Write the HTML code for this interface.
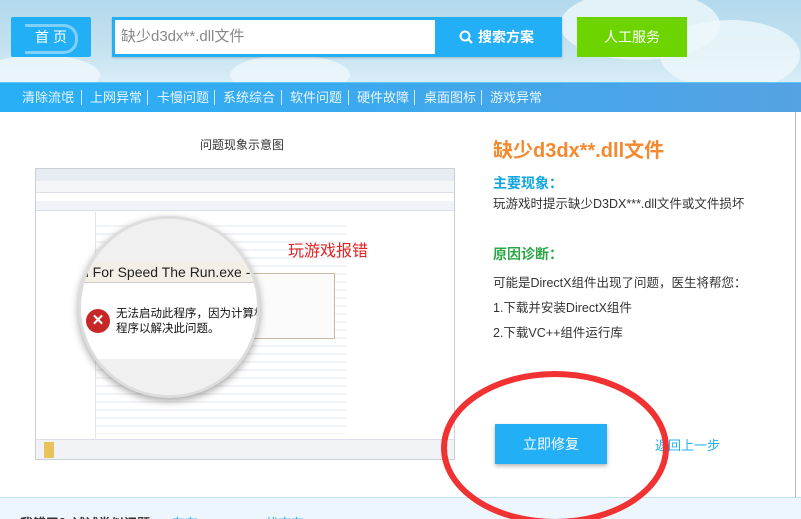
<!DOCTYPE html>
<html><head><meta charset="utf-8"><style>
*{margin:0;padding:0;box-sizing:border-box}
body{width:801px;height:519px;overflow:hidden;background:#fff;font-family:"Liberation Sans","Noto Sans CJK SC",sans-serif;position:relative}
.top{position:absolute;left:0;top:0;width:801px;height:82px;background:linear-gradient(180deg,#b3d9ec 0%,#c4e2f0 60%,#d9edf6 100%)}
.cloud{position:absolute;border-radius:50%;background:#eef7fb;opacity:.8}
.home{position:absolute;left:11px;top:17px;width:80px;height:40px;background:#22aff5;border-radius:2px;color:#fff;font-size:14px;line-height:40px;padding-left:24px;letter-spacing:4px}
.home:after{content:"";position:absolute;left:14px;top:7px;width:50px;height:24px;border:3px solid #7fd0f8;border-left:none;border-radius:0 14px 14px 0}
.search{position:absolute;left:112px;top:17px;width:250px;height:40px;background:#22aff5;padding:3px}
.search .in{position:absolute;left:3px;top:3px;width:320px;height:34px;background:#fff;color:#888;font-size:15px;line-height:34px;padding-left:6px}
.sbtn{position:absolute;left:435px;top:17px;width:127px;height:40px;background:#22aff5;color:#fff;font-size:14px;font-weight:bold;line-height:40px;padding-left:25px}
.sw{position:absolute;left:112px;top:17px;width:450px;height:40px;background:#22aff5;box-shadow:0 1px 2px rgba(0,0,0,.2)}
.green{position:absolute;left:577px;top:17px;width:110px;height:40px;background:#6dd400;color:#fff;font-size:14px;line-height:40px;text-align:center}
.nav{position:absolute;left:0;top:82px;width:801px;height:30px;background:linear-gradient(90deg,#27aff6,#55a2e4);border-top:1px solid #5cc6ff}
.nav span{position:absolute;top:0;color:#e8f6ff;font-size:13px;line-height:29px;white-space:nowrap}
.nav i{position:absolute;top:7px;width:1px;height:15px;background:#cfeaff}
.rline{position:absolute;left:795px;top:112px;width:1px;height:385px;background:#bbb}
.cap{position:absolute;left:200px;top:136px;font-size:12px;color:#333}
.win{position:absolute;left:35px;top:168px;width:420px;height:292px;background:#fff;border:1px solid #c9cfd6;overflow:hidden}
.circle{position:absolute;left:78px;top:216px;width:182px;height:182px;border-radius:50%;background:#fff;border:3px solid #ddd;box-shadow:0 3px 8px rgba(0,0,0,.35);overflow:hidden}
.title{position:absolute;left:493px;top:134px;font-size:20px;font-weight:bold;color:#f4892f}
.h{position:absolute;left:493px;font-size:14px;font-weight:bold}
.t{position:absolute;left:493px;font-size:12.5px;color:#333}
.fix{position:absolute;left:495px;top:424px;width:112px;height:40px;background:#22aff5;color:#fff;font-size:14px;text-align:center;line-height:40px;box-shadow:0 2px 4px rgba(0,0,0,.3)}
.back{position:absolute;left:655px;top:435px;font-size:13px;color:#22aff5}
.foot{position:absolute;left:0;top:497px;width:801px;height:22px;background:#edf6fd;border-top:1px solid #bfe0f5;overflow:hidden}
</style></head><body>
<div class="top">
<div class="cloud" style="left:560px;top:-10px;width:160px;height:70px"></div>
<div class="cloud" style="left:660px;top:20px;width:140px;height:70px"></div>
<div class="cloud" style="left:230px;top:55px;width:120px;height:40px"></div>
<div class="cloud" style="left:-20px;top:55px;width:120px;height:40px"></div>
</div>
<div class="home">首页</div>
<div class="sw"></div>
<div class="search"><div class="in">缺少d3dx**.dll文件</div></div>
<div class="sbtn"><svg width="14" height="14" viewBox="0 0 14 14" style="position:absolute;left:24px;top:13px"><circle cx="6" cy="6" r="4.5" fill="none" stroke="#fff" stroke-width="2"/><line x1="9.5" y1="9.5" x2="13" y2="13" stroke="#fff" stroke-width="2.2"/></svg><span style="margin-left:18px">搜索方案</span></div>
<div class="green">人工服务</div>
<div class="nav">
<span style="left:22px">清除流氓</span><i style="left:81px"></i>
<span style="left:90px">上网异常</span><i style="left:147px"></i>
<span style="left:157px">卡慢问题</span><i style="left:214px"></i>
<span style="left:223px">系统综合</span><i style="left:281px"></i>
<span style="left:290px">软件问题</span><i style="left:348px"></i>
<span style="left:357px">硬件故障</span><i style="left:414px"></i>
<span style="left:424px">桌面图标</span><i style="left:481px"></i>
<span style="left:490px">游戏异常</span>
</div>
<div class="rline"></div>
<div class="cap">问题现象示意图</div>
<div class="win">
<div style="height:12px;background:#e6ecf2"></div>
<div style="height:12px;background:#f4f6f8;border-bottom:1px solid #dde"></div>
<div style="height:8px;background:#fff"></div>
<div style="height:10px;background:#f0f4f8;border-bottom:1px solid #dde"></div>
<div style="position:absolute;left:0;top:43px;width:60px;height:230px;background:#fff;border-right:1px solid #e5e5e5"></div>
<div style="position:absolute;left:0;top:270px;width:420px;height:22px;background:#f1f3f6;border-top:1px solid #dde"></div>
<div style="position:absolute;left:8px;top:273px;width:10px;height:16px;background:#e8c25a"></div>
<div style="position:absolute;left:60px;top:50px;width:250px;height:215px;background:repeating-linear-gradient(180deg,#fff 0,#fff 6px,#e8ecf0 6px,#e8ecf0 8px);opacity:.6"></div>
<div style="position:absolute;left:215px;top:104px;width:84px;height:66px;background:#fbfbfb;border:1px solid #c9b9a0"></div>
<div style="position:absolute;left:252px;top:68px;color:#e42222;font-size:16px">玩游戏报错</div>
</div>
<div class="circle">
<div style="position:absolute;left:0;top:0;width:182px;height:42px;background:#f0f0f0"></div>
<div style="position:absolute;left:0;top:42px;width:182px;height:22px;background:#f4efe6;border-bottom:1px solid #ccc;font-size:14px;white-space:nowrap;line-height:22px;color:#222">d For Speed The Run.exe - 系统错误</div>
<div style="position:absolute;left:5px;top:90px;width:24px;height:24px;border-radius:50%;background:#c62828;color:#fff;text-align:center;line-height:24px;font-weight:bold;font-size:15px">✕</div>
<div style="position:absolute;left:35px;top:88px;font-size:11.5px;line-height:15px;white-space:nowrap;color:#111">无法启动此程序，因为计算机中<br>程序以解决此问题。</div>
<div style="position:absolute;left:0;top:140px;width:182px;height:45px;background:#f0f0f0"></div>
</div>
<div class="title">缺少d3dx**.dll文件</div>
<div class="h" style="top:173px;color:#10a6e0">主要现象：</div>
<div class="t" style="top:193px">玩游戏时提示缺少D3DX***.dll文件或文件损坏</div>
<div class="h" style="top:244px;color:#2aa745">原因诊断：</div>
<div class="t" style="top:272px">可能是DirectX组件出现了问题，医生将帮您：</div>
<div class="t" style="top:297px">1.下载并安装DirectX组件</div>
<div class="t" style="top:322px">2.下载VC++组件运行库</div>
<div class="foot"><div style="position:absolute;left:20px;top:15px;font-size:13px;color:#333;font-weight:bold">我错了？试试类似问题</div><div style="position:absolute;left:172px;top:15px;font-size:13px;color:#22aff5">有有 Support ... 状态有</div></div>
<div class="fix">立即修复</div>
<div class="back">返回上一步</div>
<svg style="position:absolute;left:0;top:0" width="801" height="519"><ellipse cx="555" cy="448" rx="111" ry="74" fill="none" stroke="#f13232" stroke-width="6"/></svg>
</body></html>
